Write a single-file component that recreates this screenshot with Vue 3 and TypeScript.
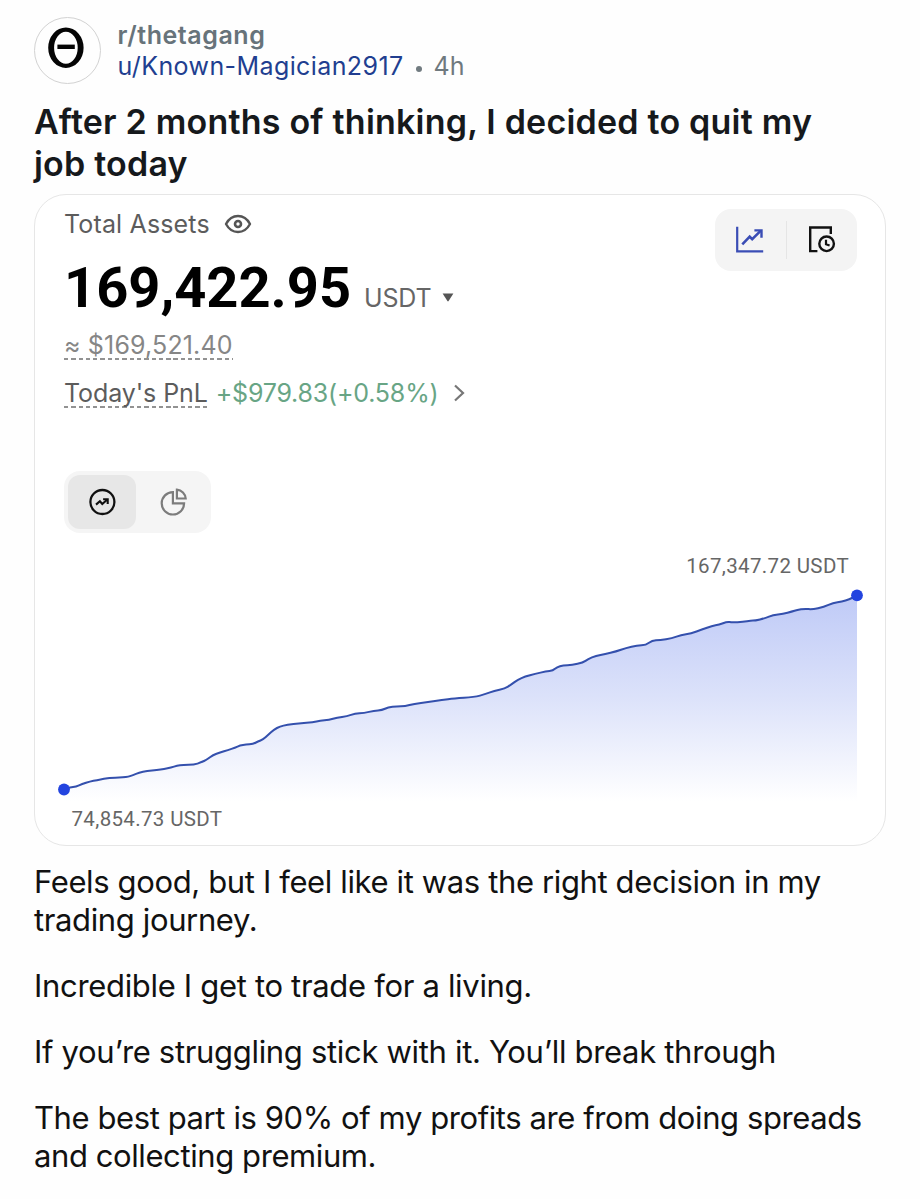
<script setup lang="ts">
interface Paragraph {
  id: string
  lines: string[]
}

const titleLines: string[] = ['After 2 months of thinking, I decided to quit my', 'job today']

const paragraphs: Paragraph[] = [
  { id: 'p1', lines: ['Feels good, but I feel like it was the right decision in my', 'trading journey.'] },
  { id: 'p2', lines: ['Incredible I get to trade for a living.'] },
  { id: 'p3', lines: ['If you’re struggling stick with it. You’ll break through'] },
  { id: 'p4', lines: ['The best part is 90% of my profits are from doing spreads', 'and collecting premium.'] },
]

// Balance curve, in the chart's own units (x: 0-852, y: 0-220)
const points: [number, number][] = [
  [30, 204.5], [36, 202.5], [42, 201.7], [48, 199], [56, 196.5], [63, 195], [70, 193.8], [77, 192.7], [93, 192.2],
  [99, 190], [105, 187.7], [113, 186], [123, 185], [130, 184], [137, 182.5], [143, 180.7], [149, 180], [160, 179.7],
  [167, 177.5], [173, 174.5], [179, 170], [186, 167.5], [194, 165], [201, 162.7], [206, 160.5], [212, 159.7],
  [219, 159], [224, 156.5], [229, 154.5], [234, 150], [240, 144.5], [246, 141.5], [253, 139.7], [266, 138.5],
  [279, 137.2], [286, 135.7], [295, 134.8], [303, 132.7], [313, 131.3], [321, 128.5], [330, 128], [340, 125.7],
  [348, 125.1], [354, 122.4], [363, 121.3], [371, 121.3], [380, 118.8], [394, 117], [408, 115], [420, 113.4],
  [440, 112.2], [452, 109], [460, 105.8], [471, 103.5], [477, 99.7], [484, 94.6], [491, 91.6], [501, 89],
  [512, 86.3], [519, 85.7], [523, 82], [529, 80.4], [538, 80], [549, 77.7], [554, 74.1], [562, 70.8], [571, 69],
  [582, 66.5], [592, 63], [603, 60.5], [612, 60], [618, 55.4], [626, 55], [638, 53.3], [647, 50], [657, 48.5],
  [668, 44.5], [678, 41], [685, 39.7], [693, 36.7], [698, 37.5], [709, 37], [717, 35.6], [721, 35.6], [731, 33.3],
  [739, 30], [749, 29], [758, 26.5], [763, 25], [771, 23.7], [778, 24.5], [790, 22], [799, 17.9], [808, 16.5],
  [815, 14.5], [823, 10.5],
]

const linePath: string = points.reduce((path, [x, y], i) => {
  if (i === 0) return `M${x} ${y}`
  const [px, py] = points[i - 1]
  return `${path}Q${px} ${py} ${(px + x) / 2} ${(py + y) / 2}`
}, '') + 'L823 10.5'
const areaPath = `${linePath}V216H30Z`
</script>

<template>
  <article class="post">
    <header class="head">
      <div class="avatar">
        <svg viewBox="0 0 66 66" width="66" height="66">
          <path fill="#050505" fill-rule="evenodd" d="M14.2 30.7a17.7 20.2 0 1 0 35.4 0a17.7 20.2 0 1 0-35.4 0ZM20.1 30.7a11.8 16 0 1 1 23.6 0a11.8 16 0 1 1-23.6 0Z" />
          <path d="M23.4 29.8H40.8" stroke="#050505" stroke-width="4.4" />
        </svg>
      </div>
      <div class="meta">
        <div class="sub">r/thetagang</div>
        <div class="byline">
          <span class="user">u/Known-Magician2917</span><i class="dot"></i><span class="age">4h</span>
        </div>
      </div>
    </header>

    <h1 class="title">
      <span v-for="line in titleLines" :key="line" class="line">{{ line }}</span>
    </h1>

    <section class="card">
      <div class="summary">
        <div class="figures">
          <div class="label">
            <span class="total">Total Assets</span>
            <svg viewBox="0 0 28 20" width="28" height="20" fill="none" stroke="#555">
              <path d="M2 10C5 4.4 9 2 14 2S23 4.4 26 10C23 15.6 19 18 14 18S5 15.6 2 10Z" stroke-width="2.4" stroke-linejoin="round" />
              <circle cx="14" cy="10" r="3" stroke-width="2.6" />
            </svg>
          </div>
          <div class="balance">
            <span class="amount">169,422.95</span><span class="unit">USDT</span>
            <svg class="caret" viewBox="0 0 12 9" width="12" height="9"><path d="M.6.5H11.4L6.6 8Q6 8.8 5.4 8Z" fill="#555" /></svg>
          </div>
          <div class="approx"><span class="dashed">≈ $169,521.40</span></div>
          <div class="pnl">
            <span class="dashed pnl-label">Today's PnL</span><span class="gain">+$979.83(+0.58%)</span>
            <svg class="chevron" viewBox="0 0 12 18" width="12" height="18" fill="none" stroke="#777" stroke-width="2.2"><path d="M2 1.5 10 9 2 16.5" /></svg>
          </div>
        </div>
        <div class="tools">
          <svg viewBox="0 0 30 30" width="30" height="30" fill="none" stroke="#3a4db5" stroke-width="2.2">
            <path d="M2.2 1.8V26.4H28.2" />
            <path d="M7.3 19.3 14.7 11.7 17.2 14.1 25.6 5.9" stroke-width="2.6" />
            <path d="M19.4 5.4H26.5V12.7" stroke-width="2.4" />
          </svg>
          <i class="divider"></i>
          <svg viewBox="0 0 30 30" width="30" height="30" fill="none" stroke="#111" stroke-width="2.4">
            <path d="M10.4 26.1H3.2V2.5H23.8V9.1" />
            <circle cx="19.6" cy="18.8" r="7.3" />
            <path d="M19 14.8V19.2L22.6 20.5" stroke-width="2.2" />
          </svg>
        </div>
      </div>

      <div class="switch">
        <span class="tab active">
          <svg viewBox="0 0 28 28" width="28" height="28" fill="none" stroke="#111">
            <circle cx="14.4" cy="14" r="12" stroke-width="2.3" />
            <path d="M8 16.6 11.9 13.2 14.3 16 19.3 11.5" stroke-width="2.1" />
            <path d="M15.1 11.3H19.7V16" stroke-width="2.1" />
          </svg>
        </span>
        <span class="tab">
          <svg viewBox="0 0 28 28" width="28" height="28" fill="none" stroke="#7c7c7c" stroke-width="2.2">
            <path d="M13.9 4.1A11.2 11.2 0 1 0 25.1 15.3H13.9Z" />
            <path d="M17.9 1.7A9.5 9.5 0 0 1 26.7 10.5H17.9Z" />
          </svg>
        </span>
      </div>

      <div class="peak">167,347.72 USDT</div>
      <svg class="chart" viewBox="0 0 852 220" width="852" height="220">
        <defs>
          <linearGradient id="area" x1="0" y1="10" x2="0" y2="216" gradientUnits="userSpaceOnUse">
            <stop offset="0" stop-color="#bfcaf7" />
            <stop offset="0.5" stop-color="#dce2fa" />
            <stop offset="1" stop-color="#fff" />
          </linearGradient>
        </defs>
        <path :d="areaPath" fill="url(#area)" />
        <path :d="linePath" fill="none" stroke="#3450ad" stroke-width="2" />
        <circle cx="30" cy="204.5" r="5.9" fill="#2344df" />
        <circle cx="823" cy="10.3" r="5.9" fill="#2344df" />
      </svg>
      <div class="start">74,854.73 USDT</div>
    </section>

    <div class="body">
      <p v-for="p in paragraphs" :key="p.id" :class="p.id">
        <span v-for="line in p.lines" :key="line" class="line">{{ line }}</span>
      </p>
    </div>
  </article>
</template>

<style>
body {
  margin: 0;
  background: #fff;
}
</style>

<style scoped>
.post {
  box-sizing: border-box;
  width: 920px;
  height: 1199px;
  padding: 17px 34px 0;
  overflow: hidden;
  background: #fefefe;
  font-family: Inter, "Liberation Sans", sans-serif;
  color: #111;
  white-space: nowrap;
}
svg {
  display: block;
  flex: none;
}
.head {
  display: flex;
  gap: 16.5px;
  height: 67px;
}
.avatar {
  box-sizing: border-box;
  width: 67px;
  height: 67px;
  border: 1px solid #d2d2d2;
  border-radius: 50%;
}
.avatar svg {
  margin: -1px 0 0 -1px;
}
.meta {
  padding-top: 3px;
}
.sub {
  font-size: 25px;
  line-height: 31px;
  font-weight: 600;
  letter-spacing: 0.55px;
  color: #67737a;
}
.byline {
  display: flex;
  align-items: center;
  font-size: 25px;
  line-height: 31px;
}
.user {
  color: #213e90;
  letter-spacing: 0.4px;
}
.dot {
  width: 6px;
  height: 6px;
  margin: 4px 12px 0 12px;
  border-radius: 50%;
  background: #717b80;
}
.age {
  color: #6f797e;
}
.line {
  display: block;
}
.title {
  margin: 17px 0 0;
  font-size: 34px;
  line-height: 41.5px;
  font-weight: 600;
  letter-spacing: 0.21px;
  color: #16191c;
}
.card {
  box-sizing: border-box;
  width: 852px;
  height: 652px;
  margin-top: 10px;
  border: 1px solid #e6e6e6;
  border-radius: 32px;
  background: #fff;
}
.summary {
  display: flex;
  justify-content: space-between;
  height: 275px;
  padding: 14px 28px 0 29px;
}
.label {
  display: flex;
  align-items: center;
  height: 30px;
  gap: 14px;
  color: #5c5c5c;
}
.total {
  font-size: 25px;
  letter-spacing: 0.15px;
}
.balance {
  display: flex;
  align-items: baseline;
  height: 75px;
  line-height: 98px;
}
.amount {
  font-family: Roboto, sans-serif;
  font-size: 56px;
  font-weight: 700;
  color: #000;
}
.unit {
  margin-left: 13px;
  font-size: 25px;
  letter-spacing: -0.2px;
  color: #666;
}
.caret {
  align-self: flex-start;
  margin: 54px 0 0 11px;
}
.approx {
  height: 48px;
  padding-top: 14px;
  box-sizing: border-box;
  font-size: 25px;
  line-height: 33px;
  letter-spacing: 0.15px;
  color: #868686;
}
.dashed {
  display: inline-block;
  height: 32px;
  line-height: 34px;
  background: repeating-linear-gradient(90deg, #929292 0 4.3px, transparent 4.3px 7.3px) 0 100% / 100% 2px no-repeat;
}
.pnl {
  display: flex;
  align-items: center;
  height: 34px;
  margin-top: 13px;
  font-size: 25px;
  color: #5c5c5c;
}
.pnl-label {
  letter-spacing: -0.1px;
}
.gain {
  margin: 2px 0 0 8px;
  letter-spacing: -0.2px;
  color: #68a585;
}
.chevron {
  margin: 2px 0 0 15px;
}
.tools {
  display: flex;
  align-items: center;
  box-sizing: border-box;
  width: 142px;
  height: 62px;
  padding: 0 20px;
  justify-content: space-between;
  border-radius: 16px;
  background: #f4f4f4;
}
.divider {
  width: 1px;
  height: 38px;
  background: #e5e5e5;
}
.switch {
  display: flex;
  box-sizing: border-box;
  width: 147px;
  height: 62px;
  margin: -13px 0 0 29px;
  padding: 4px;
  border-radius: 16px;
  background: #f5f5f5;
}
.tab {
  display: flex;
  align-items: center;
  justify-content: center;
  width: 68px;
  border-radius: 12px;
}
.tab.active {
  background: #e7e7e7;
}
.tab + .tab {
  margin-left: 4px;
}
.peak,
.start {
  font-family: Roboto, sans-serif;
  font-size: 20.5px;
  line-height: 24px;
  letter-spacing: 0.35px;
  color: #666;
}
.peak {
  margin: 21px 36px 0 0;
  text-align: right;
}
.chart {
  margin: 7px 0 0 -1px;
}
.start {
  margin: 2px 0 0 36.5px;
}
.body {
  padding-top: 17px;
  font-size: 31px;
  line-height: 38px;
  letter-spacing: -0.32px;
  color: #111;
}
.body p {
  margin: 0 0 28px;
}
.body .p1 {
  letter-spacing: -0.37px;
}
.body .p4 {
  letter-spacing: -0.41px;
}
</style>
